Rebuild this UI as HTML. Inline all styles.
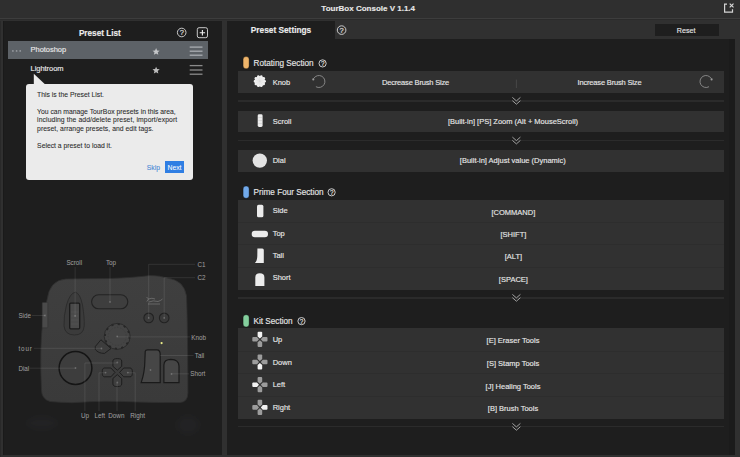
<!DOCTYPE html>
<html><head><meta charset="utf-8"><style>
html,body{margin:0;padding:0;}
body{width:740px;height:457px;overflow:hidden;position:relative;background:#303030;font-family:"Liberation Sans", sans-serif;}
div{font-family:"Liberation Sans", sans-serif;-webkit-text-stroke-width:0.14px;}
</style></head><body>

<div style="position:absolute;left:0px;top:0px;width:740.00px;height:18.30px;background:#2f2f2f;"></div>
<div style="position:absolute;left:0px;top:19.3px;width:740.00px;height:1.20px;background:#2b2b2b;"></div>
<div style="position:absolute;left:0px;top:18.3px;width:740.00px;height:1.00px;background:#3d3d3d;"></div>
<div style="position:absolute;top:3.66px;font-size:8px;line-height:normal;color:#e8e8e8;font-weight:700;white-space:nowrap;left:68.20px;width:600px;text-align:center;">TourBox Console V 1.1.4</div>
<div style="position:absolute;left:3.3px;top:21.3px;width:218.50px;height:433.90px;background:#1e1e1e;"></div>
<div style="position:absolute;left:3.3px;top:21.3px;width:1.20px;height:433.90px;background:#1a1a1a;"></div>
<div style="position:absolute;left:0px;top:21.3px;width:1.00px;height:435.70px;background:#292929;"></div>
<div style="position:absolute;top:28.68px;font-size:8.2px;line-height:normal;color:#ececec;font-weight:700;white-space:nowrap;left:78.9px;">Preset List</div>
<div style="position:absolute;top:28.40px;font-size:7.52px;line-height:normal;color:#e6e6e6;font-weight:400;white-space:nowrap;left:-118.20px;width:600px;text-align:center;">?</div>
<div style="position:absolute;left:8px;top:40.9px;width:199.50px;height:17.90px;background:#5d6267;"></div>
<div style="position:absolute;top:45.11px;font-size:7.5px;line-height:normal;color:#e8e8e8;font-weight:400;white-space:nowrap;letter-spacing:-0.05px;left:30.6px;">Photoshop</div>
<div style="position:absolute;top:63.71px;font-size:7.5px;line-height:normal;color:#e8e8e8;font-weight:400;white-space:nowrap;letter-spacing:-0.05px;left:30.6px;">Lightroom</div>
<div style="position:absolute;left:25.9px;top:83.8px;width:166.70px;height:96.10px;background:#ebebeb;border-radius:3px"></div>
<div style="position:absolute;top:90.75px;font-size:6.8px;line-height:normal;color:#2c2c2c;font-weight:400;white-space:nowrap;left:37.1px;-webkit-text-stroke-width:0.08px;">This is the Preset List.</div>
<div style="position:absolute;top:107.85px;font-size:6.8px;line-height:normal;color:#2c2c2c;font-weight:400;white-space:nowrap;left:37.1px;-webkit-text-stroke-width:0.08px;">You can manage TourBox presets in this area,</div>
<div style="position:absolute;top:115.85px;font-size:6.8px;line-height:normal;color:#2c2c2c;font-weight:400;white-space:nowrap;letter-spacing:0.09px;left:37.1px;-webkit-text-stroke-width:0.08px;">including the add/delete preset, import/export</div>
<div style="position:absolute;top:124.75px;font-size:6.8px;line-height:normal;color:#2c2c2c;font-weight:400;white-space:nowrap;letter-spacing:0.04px;left:37.1px;-webkit-text-stroke-width:0.08px;">preset, arrange presets, and edit tags.</div>
<div style="position:absolute;top:141.65px;font-size:6.8px;line-height:normal;color:#2c2c2c;font-weight:400;white-space:nowrap;left:37.1px;-webkit-text-stroke-width:0.08px;">Select a preset to load it.</div>
<div style="position:absolute;top:163.55px;font-size:6.8px;line-height:normal;color:#4a88d6;font-weight:400;white-space:nowrap;left:-146.60px;width:600px;text-align:center;-webkit-text-stroke-width:0.08px;">Skip</div>
<div style="position:absolute;left:165px;top:161px;width:19.00px;height:11.50px;background:#2f7ee3;"></div>
<div style="position:absolute;top:163.55px;font-size:6.8px;line-height:normal;color:#ffffff;font-weight:400;white-space:nowrap;left:-125.50px;width:600px;text-align:center;-webkit-text-stroke-width:0.05px;">Next</div>
<div style="position:absolute;left:227.3px;top:21.2px;width:507.50px;height:434.30px;background:#1e1e1e;"></div>
<div style="position:absolute;left:334.5px;top:21.2px;width:400.30px;height:18.00px;background:#303030;"></div>
<div style="position:absolute;top:25.19px;font-size:8.3px;line-height:normal;color:#ececec;font-weight:700;white-space:nowrap;left:250.8px;">Preset Settings</div>
<div style="position:absolute;top:26.00px;font-size:7.52px;line-height:normal;color:#e6e6e6;font-weight:400;white-space:nowrap;left:41.70px;width:600px;text-align:center;">?</div>
<div style="position:absolute;left:654.6px;top:24px;width:64.40px;height:11.80px;background:#1e1e1e;"></div>
<div style="position:absolute;top:26.57px;font-size:7.1px;line-height:normal;color:#e6e6e6;font-weight:400;white-space:nowrap;left:386.10px;width:600px;text-align:center;">Reset</div>
<div style="position:absolute;left:728.6px;top:39.2px;width:6.20px;height:416.30px;background:#1b1b1b;"></div>
<div style="position:absolute;top:58.98px;font-size:8.2px;line-height:normal;color:#e6e6e6;font-weight:400;white-space:nowrap;left:253.5px;">Rotating Section</div>
<div style="position:absolute;top:59.97px;font-size:6.3px;line-height:normal;color:#e6e6e6;font-weight:400;white-space:nowrap;left:22.70px;width:600px;text-align:center;">?</div>
<div style="position:absolute;left:238.2px;top:71.1px;width:486.10px;height:21.70px;background:#313131;"></div>
<div style="position:absolute;top:77.61px;font-size:7.5px;line-height:normal;color:#e6e6e6;font-weight:400;white-space:nowrap;left:272.7px;">Knob</div>
<div style="position:absolute;top:77.91px;font-size:7.5px;line-height:normal;color:#e6e6e6;font-weight:400;white-space:nowrap;letter-spacing:-0.17px;left:115.50px;width:600px;text-align:center;">Decrease Brush Size</div>
<div style="position:absolute;top:77.91px;font-size:7.5px;line-height:normal;color:#e6e6e6;font-weight:400;white-space:nowrap;letter-spacing:-0.17px;left:309.50px;width:600px;text-align:center;">Increase Brush Size</div>
<div style="position:absolute;left:238px;top:100.0px;width:486.30px;height:1.60px;background:#2b2b2b;"></div>
<div style="position:absolute;left:238.2px;top:110.6px;width:486.10px;height:21.50px;background:#313131;"></div>
<div style="position:absolute;top:116.61px;font-size:7.5px;line-height:normal;color:#e6e6e6;font-weight:400;white-space:nowrap;left:272.7px;">Scroll</div>
<div style="position:absolute;top:116.51px;font-size:7.5px;line-height:normal;color:#e6e6e6;font-weight:400;white-space:nowrap;left:213.00px;width:600px;text-align:center;">[Built-in] [PS] Zoom (Alt + MouseScroll)</div>
<div style="position:absolute;left:238px;top:139.7px;width:486.30px;height:1.60px;background:#2b2b2b;"></div>
<div style="position:absolute;left:238.2px;top:149.6px;width:486.10px;height:22.00px;background:#313131;"></div>
<div style="position:absolute;top:155.71px;font-size:7.5px;line-height:normal;color:#e6e6e6;font-weight:400;white-space:nowrap;left:272.7px;">Dial</div>
<div style="position:absolute;top:155.81px;font-size:7.5px;line-height:normal;color:#e6e6e6;font-weight:400;white-space:nowrap;left:212.80px;width:600px;text-align:center;">[Built-in] Adjust value (Dynamic)</div>
<div style="position:absolute;top:188.48px;font-size:8.2px;line-height:normal;color:#e6e6e6;font-weight:400;white-space:nowrap;left:253.5px;">Prime Four Section</div>
<div style="position:absolute;top:188.87px;font-size:6.3px;line-height:normal;color:#e6e6e6;font-weight:400;white-space:nowrap;left:31.70px;width:600px;text-align:center;">?</div>
<div style="position:absolute;left:238.0px;top:199.9px;width:486.30px;height:89.70px;background:#313131;"></div>
<div style="position:absolute;left:238.0px;top:221.7px;width:486.30px;height:1.00px;background:#2d2d2d;"></div>
<div style="position:absolute;left:238.0px;top:244.1px;width:486.30px;height:1.00px;background:#2d2d2d;"></div>
<div style="position:absolute;left:238.0px;top:266.5px;width:486.30px;height:1.00px;background:#2d2d2d;"></div>
<div style="position:absolute;top:206.31px;font-size:7.5px;line-height:normal;color:#e6e6e6;font-weight:400;white-space:nowrap;left:272.7px;">Side</div>
<div style="position:absolute;top:207.71px;font-size:7.5px;line-height:normal;color:#e6e6e6;font-weight:400;white-space:nowrap;left:213.40px;width:600px;text-align:center;">[COMMAND]</div>
<div style="position:absolute;top:228.61px;font-size:7.5px;line-height:normal;color:#e6e6e6;font-weight:400;white-space:nowrap;left:272.7px;">Top</div>
<div style="position:absolute;top:230.01px;font-size:7.5px;line-height:normal;color:#e6e6e6;font-weight:400;white-space:nowrap;left:213.40px;width:600px;text-align:center;">[SHIFT]</div>
<div style="position:absolute;top:251.01px;font-size:7.5px;line-height:normal;color:#e6e6e6;font-weight:400;white-space:nowrap;left:272.7px;">Tall</div>
<div style="position:absolute;top:252.41px;font-size:7.5px;line-height:normal;color:#e6e6e6;font-weight:400;white-space:nowrap;left:213.40px;width:600px;text-align:center;">[ALT]</div>
<div style="position:absolute;top:273.41px;font-size:7.5px;line-height:normal;color:#e6e6e6;font-weight:400;white-space:nowrap;left:272.7px;">Short</div>
<div style="position:absolute;top:274.81px;font-size:7.5px;line-height:normal;color:#e6e6e6;font-weight:400;white-space:nowrap;left:213.40px;width:600px;text-align:center;">[SPACE]</div>
<div style="position:absolute;left:238px;top:297.09999999999997px;width:486.30px;height:1.60px;background:#2b2b2b;"></div>
<div style="position:absolute;top:317.18px;font-size:8.2px;line-height:normal;color:#e6e6e6;font-weight:400;white-space:nowrap;left:253.5px;">Kit Section</div>
<div style="position:absolute;top:317.67px;font-size:6.3px;line-height:normal;color:#e6e6e6;font-weight:400;white-space:nowrap;left:1.60px;width:600px;text-align:center;">?</div>
<div style="position:absolute;left:238.0px;top:328.2px;width:486.30px;height:90.80px;background:#313131;"></div>
<div style="position:absolute;left:238.0px;top:350.5px;width:486.30px;height:1.00px;background:#2d2d2d;"></div>
<div style="position:absolute;left:238.0px;top:373.2px;width:486.30px;height:1.00px;background:#2d2d2d;"></div>
<div style="position:absolute;left:238.0px;top:395.9px;width:486.30px;height:1.00px;background:#2d2d2d;"></div>
<div style="position:absolute;top:334.81px;font-size:7.5px;line-height:normal;color:#e6e6e6;font-weight:400;white-space:nowrap;left:272.7px;">Up</div>
<div style="position:absolute;top:336.21px;font-size:7.5px;line-height:normal;color:#e6e6e6;font-weight:400;white-space:nowrap;left:213.00px;width:600px;text-align:center;">[E] Eraser Tools</div>
<div style="position:absolute;top:357.51px;font-size:7.5px;line-height:normal;color:#e6e6e6;font-weight:400;white-space:nowrap;left:272.7px;">Down</div>
<div style="position:absolute;top:358.91px;font-size:7.5px;line-height:normal;color:#e6e6e6;font-weight:400;white-space:nowrap;left:213.00px;width:600px;text-align:center;">[S] Stamp Tools</div>
<div style="position:absolute;top:380.21px;font-size:7.5px;line-height:normal;color:#e6e6e6;font-weight:400;white-space:nowrap;left:272.7px;">Left</div>
<div style="position:absolute;top:381.61px;font-size:7.5px;line-height:normal;color:#e6e6e6;font-weight:400;white-space:nowrap;left:213.00px;width:600px;text-align:center;">[J] Healing Tools</div>
<div style="position:absolute;top:402.91px;font-size:7.5px;line-height:normal;color:#e6e6e6;font-weight:400;white-space:nowrap;left:272.7px;">Right</div>
<div style="position:absolute;top:404.31px;font-size:7.5px;line-height:normal;color:#e6e6e6;font-weight:400;white-space:nowrap;left:213.00px;width:600px;text-align:center;">[B] Brush Tools</div>
<div style="position:absolute;left:238px;top:425.7px;width:486.30px;height:1.60px;background:#2b2b2b;"></div>
<div style="position:absolute;top:259.20px;font-size:6.3px;line-height:normal;color:#a0a0a0;font-weight:400;white-space:nowrap;left:66.4px;-webkit-text-stroke-width:0;">Scroll</div>
<div style="position:absolute;top:259.40px;font-size:6.3px;line-height:normal;color:#a0a0a0;font-weight:400;white-space:nowrap;left:105.9px;-webkit-text-stroke-width:0;">Top</div>
<div style="position:absolute;top:260.90px;font-size:6.3px;line-height:normal;color:#a0a0a0;font-weight:400;white-space:nowrap;left:197.5px;-webkit-text-stroke-width:0;">C1</div>
<div style="position:absolute;top:274.30px;font-size:6.3px;line-height:normal;color:#a0a0a0;font-weight:400;white-space:nowrap;left:197.5px;-webkit-text-stroke-width:0;">C2</div>
<div style="position:absolute;top:312.10px;font-size:6.3px;line-height:normal;color:#a0a0a0;font-weight:400;white-space:nowrap;left:18.4px;-webkit-text-stroke-width:0;">Side</div>
<div style="position:absolute;top:333.50px;font-size:6.3px;line-height:normal;color:#a0a0a0;font-weight:400;white-space:nowrap;left:191.3px;-webkit-text-stroke-width:0;">Knob</div>
<div style="position:absolute;top:344.90px;font-size:6.3px;line-height:normal;color:#a0a0a0;font-weight:400;white-space:nowrap;letter-spacing:0.9px;left:18.4px;-webkit-text-stroke-width:0;">tour</div>
<div style="position:absolute;top:352.10px;font-size:6.3px;line-height:normal;color:#a0a0a0;font-weight:400;white-space:nowrap;left:194.8px;-webkit-text-stroke-width:0;">Tall</div>
<div style="position:absolute;top:364.80px;font-size:6.3px;line-height:normal;color:#a0a0a0;font-weight:400;white-space:nowrap;left:18.4px;-webkit-text-stroke-width:0;">Dial</div>
<div style="position:absolute;top:370.20px;font-size:6.3px;line-height:normal;color:#a0a0a0;font-weight:400;white-space:nowrap;left:190.2px;-webkit-text-stroke-width:0;">Short</div>
<div style="position:absolute;top:412.00px;font-size:6.3px;line-height:normal;color:#a0a0a0;font-weight:400;white-space:nowrap;left:81px;-webkit-text-stroke-width:0;">Up</div>
<div style="position:absolute;top:412.00px;font-size:6.3px;line-height:normal;color:#a0a0a0;font-weight:400;white-space:nowrap;left:94.4px;-webkit-text-stroke-width:0;">Left</div>
<div style="position:absolute;top:412.00px;font-size:6.3px;line-height:normal;color:#a0a0a0;font-weight:400;white-space:nowrap;left:108.3px;-webkit-text-stroke-width:0;">Down</div>
<div style="position:absolute;top:412.00px;font-size:6.3px;line-height:normal;color:#a0a0a0;font-weight:400;white-space:nowrap;left:130.2px;-webkit-text-stroke-width:0;">Right</div>
<svg width="740" height="457" viewBox="0 0 740 457" style="position:absolute;left:0;top:0">
<path d="M727 4.1 H724.6 V12.1 H732.5 V9.3" fill="none" stroke="#d4d4d4" stroke-width="1.2"/>
<path d="M729.7 3.6 L733.5 7.4 M733.5 3.6 L729.7 7.4" stroke="#dadada" stroke-width="1.1"/>
<circle cx="181.7" cy="32.5" r="4.3" fill="none" stroke="#dcdcdc" stroke-width="0.9"/>
<rect x="197.3" y="27.7" width="10.2" height="10" rx="1.8" fill="none" stroke="#dcdcdc" stroke-width="0.9"/>
<path d="M202.4 30 V35.4 M199.7 32.7 H205.1" stroke="#f0f0f0" stroke-width="1.1"/>
<g fill="#969a9f"><circle cx="12.9" cy="50.9" r="0.9"/><circle cx="16.6" cy="50.9" r="0.9"/><circle cx="20.2" cy="50.9" r="0.9"/></g>
<polygon points="156.10,48.00 157.11,50.42 159.71,50.63 157.73,52.33 158.33,54.87 156.10,53.51 153.87,54.87 154.47,52.33 152.49,50.63 155.09,50.42" fill="#c4c6c8"/>
<polygon points="156.10,66.70 157.11,69.12 159.71,69.33 157.73,71.03 158.33,73.57 156.10,72.21 153.87,73.57 154.47,71.03 152.49,69.33 155.09,69.12" fill="#bdbdbd"/>
<rect x="189.7" y="46.45" width="12.8" height="1.3" fill="#a9adb1"/>
<rect x="189.7" y="50.550000000000004" width="12.8" height="1.3" fill="#a9adb1"/>
<rect x="189.7" y="54.550000000000004" width="12.8" height="1.3" fill="#a9adb1"/>
<rect x="189.7" y="64.94999999999999" width="12.8" height="1.3" fill="#8a8a8a"/>
<rect x="189.7" y="69.35" width="12.8" height="1.3" fill="#8a8a8a"/>
<rect x="189.7" y="73.55" width="12.8" height="1.3" fill="#8a8a8a"/>
<polygon points="33.8,73.8 33.8,84.5 45.2,84.5" fill="#ebebeb"/>
<circle cx="341.6" cy="30.1" r="4.3" fill="none" stroke="#dcdcdc" stroke-width="0.9"/>
<rect x="243.1" y="56.5" width="6.0" height="12.3" rx="3" fill="#eeb46a" stroke="rgba(0,0,0,0.45)" stroke-width="0.7"/>
<circle cx="322.6" cy="63.4" r="3.6" fill="none" stroke="#dcdcdc" stroke-width="0.9"/>
<rect x="515.9" y="79.6" width="1" height="8.4" fill="#474747"/>
<circle cx="259.8" cy="81.2" r="5.3" fill="#efefef"/>
<circle cx="264.70" cy="81.20" r="1.25" fill="#efefef"/>
<circle cx="263.76" cy="84.08" r="1.25" fill="#efefef"/>
<circle cx="261.31" cy="85.86" r="1.25" fill="#efefef"/>
<circle cx="258.29" cy="85.86" r="1.25" fill="#efefef"/>
<circle cx="255.84" cy="84.08" r="1.25" fill="#efefef"/>
<circle cx="254.90" cy="81.20" r="1.25" fill="#efefef"/>
<circle cx="255.84" cy="78.32" r="1.25" fill="#efefef"/>
<circle cx="258.29" cy="76.54" r="1.25" fill="#efefef"/>
<circle cx="261.31" cy="76.54" r="1.25" fill="#efefef"/>
<circle cx="263.76" cy="78.32" r="1.25" fill="#efefef"/>
<line x1="255.81" y1="79.90" x2="263.79" y2="82.50" stroke="#d6d6d6" stroke-width="0.4"/>
<line x1="257.33" y1="77.80" x2="262.27" y2="84.60" stroke="#d6d6d6" stroke-width="0.4"/>
<line x1="259.80" y1="77.00" x2="259.80" y2="85.40" stroke="#d6d6d6" stroke-width="0.4"/>
<line x1="262.27" y1="77.80" x2="257.33" y2="84.60" stroke="#d6d6d6" stroke-width="0.4"/>
<line x1="263.79" y1="79.90" x2="255.81" y2="82.50" stroke="#d6d6d6" stroke-width="0.4"/>
<path d="M313.70 78.50 A6.0 6.0 0 1 1 315.90 86.70" fill="none" stroke="#8e8e8e" stroke-width="0.9"/><circle cx="313.30" cy="79.40" r="1.05" fill="#9a9a9a"/>
<path d="M711.20 78.50 A6.0 6.0 0 1 0 709.00 86.70" fill="none" stroke="#8e8e8e" stroke-width="0.9"/><circle cx="711.60" cy="79.40" r="1.05" fill="#9a9a9a"/>
<path d="M512.4 97.39999999999999 L516.4 100.89999999999999 L520.4 97.39999999999999 M512.4 100.69999999999999 L516.4 104.19999999999999 L520.4 100.69999999999999" fill="none" stroke="#a6a6a6" stroke-width="0.95"/>
<rect x="257.7" y="114.3" width="4.9" height="12.7" rx="1.4" fill="#ececec"/>
<path d="M258.3 117.5 H262 M258.3 120.5 H262 M258.3 123.5 H262" stroke="#c8c8c8" stroke-width="0.5"/>
<path d="M512.4 137.10000000000002 L516.4 140.60000000000002 L520.4 137.10000000000002 M512.4 140.4 L516.4 143.9 L520.4 140.4" fill="none" stroke="#a6a6a6" stroke-width="0.95"/>
<circle cx="259.8" cy="160.6" r="7.2" fill="#e4e4e4"/>
<rect x="243.1" y="186.0" width="6.0" height="12.3" rx="3" fill="#71a9ea" stroke="rgba(0,0,0,0.45)" stroke-width="0.7"/>
<circle cx="331.6" cy="192.3" r="3.6" fill="none" stroke="#dcdcdc" stroke-width="0.9"/>
<rect x="257.0" y="204.8" width="6.4" height="12.5" rx="1.6" fill="#ececec"/>
<rect x="251.7" y="230.7" width="16.3" height="6.5" rx="3.2" fill="#ececec"/>
<path d="M257.4 248.4 H262.3 Q263.8 248.4 263.8 249.9 V263.1 H254.9 Q257.2 261 257.3 256 Z" fill="#ececec"/>
<path d="M255.3 286.1 V277.5 Q255.3 273.3 259.8 273.3 Q264.4 273.3 264.4 277.5 V286.1 Z" fill="#ececec"/>
<path d="M512.4 294.40000000000003 L516.4 297.90000000000003 L520.4 294.40000000000003 M512.4 297.70000000000005 L516.4 301.20000000000005 L520.4 297.70000000000005" fill="none" stroke="#a6a6a6" stroke-width="0.95"/>
<rect x="243.1" y="314.7" width="6.0" height="12.3" rx="3" fill="#84cf9d" stroke="rgba(0,0,0,0.45)" stroke-width="0.7"/>
<circle cx="301.5" cy="321.1" r="3.6" fill="none" stroke="#dcdcdc" stroke-width="0.9"/>
<path d="M257.59999999999997 332.7 Q257.59999999999997 331.7 258.59999999999997 331.7 H261.2 Q262.2 331.7 262.2 332.7 V336.40000000000003 L259.9 338.40000000000003 L257.59999999999997 336.40000000000003 Z" fill="#f4f4f4"/>
<path d="M257.59999999999997 345.90000000000003 Q257.59999999999997 346.90000000000003 258.59999999999997 346.90000000000003 H261.2 Q262.2 346.90000000000003 262.2 345.90000000000003 V342.2 L259.9 340.2 L257.59999999999997 342.2 Z" fill="#9c9c9c"/>
<path d="M253.29999999999998 337.0 Q252.29999999999998 337.0 252.29999999999998 338.0 V340.6 Q252.29999999999998 341.6 253.29999999999998 341.6 H257.0 L259.0 339.3 L257.0 337.0 Z" fill="#9c9c9c"/>
<path d="M266.5 337.0 Q267.5 337.0 267.5 338.0 V340.6 Q267.5 341.6 266.5 341.6 H262.79999999999995 L260.79999999999995 339.3 L262.79999999999995 337.0 Z" fill="#9c9c9c"/>
<path d="M257.59999999999997 355.4 Q257.59999999999997 354.4 258.59999999999997 354.4 H261.2 Q262.2 354.4 262.2 355.4 V359.1 L259.9 361.1 L257.59999999999997 359.1 Z" fill="#9c9c9c"/>
<path d="M257.59999999999997 368.6 Q257.59999999999997 369.6 258.59999999999997 369.6 H261.2 Q262.2 369.6 262.2 368.6 V364.9 L259.9 362.9 L257.59999999999997 364.9 Z" fill="#f4f4f4"/>
<path d="M253.29999999999998 359.7 Q252.29999999999998 359.7 252.29999999999998 360.7 V363.3 Q252.29999999999998 364.3 253.29999999999998 364.3 H257.0 L259.0 362.0 L257.0 359.7 Z" fill="#9c9c9c"/>
<path d="M266.5 359.7 Q267.5 359.7 267.5 360.7 V363.3 Q267.5 364.3 266.5 364.3 H262.79999999999995 L260.79999999999995 362.0 L262.79999999999995 359.7 Z" fill="#9c9c9c"/>
<path d="M257.59999999999997 378.09999999999997 Q257.59999999999997 377.09999999999997 258.59999999999997 377.09999999999997 H261.2 Q262.2 377.09999999999997 262.2 378.09999999999997 V381.8 L259.9 383.8 L257.59999999999997 381.8 Z" fill="#9c9c9c"/>
<path d="M257.59999999999997 391.3 Q257.59999999999997 392.3 258.59999999999997 392.3 H261.2 Q262.2 392.3 262.2 391.3 V387.59999999999997 L259.9 385.59999999999997 L257.59999999999997 387.59999999999997 Z" fill="#9c9c9c"/>
<path d="M253.29999999999998 382.4 Q252.29999999999998 382.4 252.29999999999998 383.4 V386.0 Q252.29999999999998 387.0 253.29999999999998 387.0 H257.0 L259.0 384.7 L257.0 382.4 Z" fill="#f4f4f4"/>
<path d="M266.5 382.4 Q267.5 382.4 267.5 383.4 V386.0 Q267.5 387.0 266.5 387.0 H262.79999999999995 L260.79999999999995 384.7 L262.79999999999995 382.4 Z" fill="#9c9c9c"/>
<path d="M257.59999999999997 400.79999999999995 Q257.59999999999997 399.79999999999995 258.59999999999997 399.79999999999995 H261.2 Q262.2 399.79999999999995 262.2 400.79999999999995 V404.5 L259.9 406.5 L257.59999999999997 404.5 Z" fill="#9c9c9c"/>
<path d="M257.59999999999997 414.0 Q257.59999999999997 415.0 258.59999999999997 415.0 H261.2 Q262.2 415.0 262.2 414.0 V410.29999999999995 L259.9 408.29999999999995 L257.59999999999997 410.29999999999995 Z" fill="#9c9c9c"/>
<path d="M253.29999999999998 405.09999999999997 Q252.29999999999998 405.09999999999997 252.29999999999998 406.09999999999997 V408.7 Q252.29999999999998 409.7 253.29999999999998 409.7 H257.0 L259.0 407.4 L257.0 405.09999999999997 Z" fill="#9c9c9c"/>
<path d="M266.5 405.09999999999997 Q267.5 405.09999999999997 267.5 406.09999999999997 V408.7 Q267.5 409.7 266.5 409.7 H262.79999999999995 L260.79999999999995 407.4 L262.79999999999995 405.09999999999997 Z" fill="#f4f4f4"/>
<path d="M512.4 423.40000000000003 L516.4 426.90000000000003 L520.4 423.40000000000003 M512.4 426.70000000000005 L516.4 430.20000000000005 L520.4 426.70000000000005" fill="none" stroke="#a6a6a6" stroke-width="0.95"/>
<defs><linearGradient id="bg" x1="0" y1="0" x2="0" y2="1"><stop offset="0" stop-color="#3f3f3f"/><stop offset="1" stop-color="#3a3a3a"/></linearGradient></defs>
<path d="M47 300 Q49.5 280 66 279 Q90 278.6 110 278.5 Q135 277.5 150 275.5 Q160 275.5 167 278 Q184 280 186.5 296 Q187.6 320 187.9 393 Q187.7 402.3 180 402.5 Q160 402.8 137 402 Q120 401.2 105 401.2 Q90 401.5 72 402.7 Q58 402.3 50 401.5 Q41.5 399 41.5 390 Q40.6 370 40.8 355 Q41.2 335 42.2 328 Q44 310 47 300 Z" fill="url(#bg)" stroke="#2e2e2e" stroke-width="0.8"/>
<defs><filter id="bl" x="-50%" y="-50%" width="200%" height="200%"><feGaussianBlur stdDeviation="3"/></filter></defs>
<ellipse cx="42" cy="423" rx="15" ry="6" fill="rgba(90,105,120,0.07)" filter="url(#bl)"/>
<ellipse cx="188" cy="425" rx="11" ry="9" fill="rgba(90,105,120,0.07)" filter="url(#bl)"/>
<rect x="42.2" y="302.4" width="5.6" height="25.4" rx="0.8" fill="#4a4a4a" stroke="#333" stroke-width="0.5"/>
<path d="M75.3 292.2 Q80 293 82.5 305 Q84.6 318 84.2 326 Q83.5 335 74.5 335 Q65 335 64 326 Q63.6 316 66.5 305 Q70 293 75.3 292.2 Z" fill="#3b3b3b" stroke="#2a2a2a" stroke-width="0.9"/>
<rect x="69.7" y="303.2" width="10" height="25.6" rx="1" fill="#4a4a4a" stroke="#1c1c1c" stroke-width="1.3"/>
<path d="M71 312 H78.5 M71 316 H78.5 M71 320 H78.5 M71 324 H78.5" stroke="#555" stroke-width="0.6"/>
<rect x="91.6" y="294.8" width="36.2" height="14" rx="7" fill="#3e3e3e" stroke="#232323" stroke-width="1.1"/>
<circle cx="148.7" cy="317.9" r="4.8" fill="#3a3a3a" stroke="#222" stroke-width="1.1"/>
<circle cx="164.2" cy="317.9" r="4.8" fill="#3a3a3a" stroke="#222" stroke-width="1.1"/>
<path d="M146.5 297 L148.5 299 L146.8 301.5 M148.5 299 Q152 297.5 155 299 M149 302 Q153 300 158 301.5 Q161 300.5 162.5 299 M148 304 H160" fill="none" stroke="#7a7a7a" stroke-width="0.7"/>
<circle cx="117.2" cy="336.4" r="13" fill="#444444" stroke="#2b2b2b" stroke-width="1"/>
<circle cx="117.2" cy="336.4" r="12.2" fill="none" stroke="#262626" stroke-width="1.8" stroke-dasharray="2.2 4.2"/>
<circle cx="117.2" cy="336.4" r="9" fill="none" stroke="#3c3c3c" stroke-width="0.8" stroke-dasharray="1.5 1.5"/>
<path d="M95.3 346.5 L100.9 339.8 L111 348.5 L104.5 353.4 Q98.5 353.5 95.3 349.5 Z" fill="#3d3d3d" stroke="#202020" stroke-width="1"/>
<circle cx="75.5" cy="368" r="16.4" fill="#3d3d3d" stroke="#151515" stroke-width="1.5"/>
<path d="M112.9 361 Q112.9 358.6 117.3 358.6 Q121.7 358.6 121.7 361 V366.3 L117.3 370.2 L112.9 366.3 Z" fill="#3e3e3e" stroke="#1e1e1e" stroke-width="1"/>
<path d="M112.9 384 Q112.9 386.6 117.3 386.6 Q121.7 386.6 121.7 384 V378.5 L117.3 374.6 L112.9 378.5 Z" fill="#3e3e3e" stroke="#1e1e1e" stroke-width="1"/>
<path d="M104.5 368 Q102.2 368 102.2 372.4 Q102.2 376.8 104.5 376.8 H110.9 L115 372.4 L110.9 368 Z" fill="#3e3e3e" stroke="#1e1e1e" stroke-width="1"/>
<path d="M130.1 368 Q132.4 368 132.4 372.4 Q132.4 376.8 130.1 376.8 H123.7 L119.6 372.4 L123.7 368 Z" fill="#3e3e3e" stroke="#1e1e1e" stroke-width="1"/>
<path d="M145.2 351.5 Q145.5 349.8 147.5 349.8 H157 Q160 349.8 160.2 354 V382.6 H141.2 Q144.8 372 144.9 360 Z" fill="#464646" stroke="#1a1a1a" stroke-width="1.2"/>
<path d="M163.9 382.6 V365 Q164 359.3 171 359.3 Q178.8 359.5 179 366 V382.6 Z" fill="#464646" stroke="#1a1a1a" stroke-width="1.2"/>
<circle cx="161.6" cy="343.1" r="1.1" fill="#eef08a"/>
<line x1="75.1" y1="267" x2="75.1" y2="316" stroke="rgba(255,255,255,0.16)" stroke-width="0.6"/>
<line x1="110" y1="267" x2="110" y2="302" stroke="rgba(255,255,255,0.16)" stroke-width="0.6"/>
<line x1="148.7" y1="264.3" x2="195" y2="264.3" stroke="rgba(255,255,255,0.16)" stroke-width="0.6"/>
<line x1="148.7" y1="264.3" x2="148.7" y2="318" stroke="rgba(255,255,255,0.16)" stroke-width="0.6"/>
<line x1="164.2" y1="277.7" x2="195" y2="277.7" stroke="rgba(255,255,255,0.16)" stroke-width="0.6"/>
<line x1="164.2" y1="277.7" x2="164.2" y2="318" stroke="rgba(255,255,255,0.16)" stroke-width="0.6"/>
<line x1="32" y1="315.5" x2="45" y2="315.5" stroke="rgba(255,255,255,0.16)" stroke-width="0.6"/>
<line x1="117" y1="336.9" x2="190" y2="336.9" stroke="rgba(255,255,255,0.16)" stroke-width="0.6"/>
<line x1="34" y1="348.3" x2="101.6" y2="348.3" stroke="rgba(255,255,255,0.16)" stroke-width="0.6"/>
<line x1="160.2" y1="355.5" x2="193.5" y2="355.5" stroke="rgba(255,255,255,0.16)" stroke-width="0.6"/>
<line x1="29.5" y1="368.2" x2="75.7" y2="368.2" stroke="rgba(255,255,255,0.16)" stroke-width="0.6"/>
<line x1="171.5" y1="373.8" x2="189" y2="373.8" stroke="rgba(255,255,255,0.16)" stroke-width="0.6"/>
<line x1="84.9" y1="411" x2="84.9" y2="363" stroke="rgba(255,255,255,0.16)" stroke-width="0.6"/>
<line x1="84.9" y1="363" x2="117" y2="363" stroke="rgba(255,255,255,0.16)" stroke-width="0.6"/>
<line x1="99" y1="411" x2="99" y2="372.8" stroke="rgba(255,255,255,0.16)" stroke-width="0.6"/>
<line x1="99" y1="372.8" x2="105.6" y2="372.8" stroke="rgba(255,255,255,0.16)" stroke-width="0.6"/>
<line x1="117" y1="411" x2="117" y2="382.7" stroke="rgba(255,255,255,0.16)" stroke-width="0.6"/>
<line x1="135.2" y1="411" x2="135.2" y2="372.8" stroke="rgba(255,255,255,0.16)" stroke-width="0.6"/>
<line x1="127.5" y1="372.8" x2="135.2" y2="372.8" stroke="rgba(255,255,255,0.16)" stroke-width="0.6"/>
<circle cx="75.1" cy="316" r="0.9" fill="rgba(255,255,255,0.22)"/>
<circle cx="110" cy="302" r="0.9" fill="rgba(255,255,255,0.22)"/>
<circle cx="148.7" cy="318" r="0.9" fill="rgba(255,255,255,0.22)"/>
<circle cx="164.2" cy="318" r="0.9" fill="rgba(255,255,255,0.22)"/>
<circle cx="45" cy="315.5" r="0.9" fill="rgba(255,255,255,0.22)"/>
<circle cx="117.2" cy="336.4" r="0.9" fill="rgba(255,255,255,0.22)"/>
<circle cx="101.5" cy="348.5" r="0.9" fill="rgba(255,255,255,0.22)"/>
<circle cx="75.5" cy="368" r="0.9" fill="rgba(255,255,255,0.22)"/>
<circle cx="117.3" cy="362.5" r="0.9" fill="rgba(255,255,255,0.22)"/>
<circle cx="117.3" cy="382.5" r="0.9" fill="rgba(255,255,255,0.22)"/>
<circle cx="105.6" cy="372.6" r="0.9" fill="rgba(255,255,255,0.22)"/>
<circle cx="127.8" cy="372.6" r="0.9" fill="rgba(255,255,255,0.22)"/>
<circle cx="150.5" cy="370" r="0.9" fill="rgba(255,255,255,0.22)"/>
<circle cx="171.5" cy="374" r="0.9" fill="rgba(255,255,255,0.22)"/>
</svg>
</body></html>
